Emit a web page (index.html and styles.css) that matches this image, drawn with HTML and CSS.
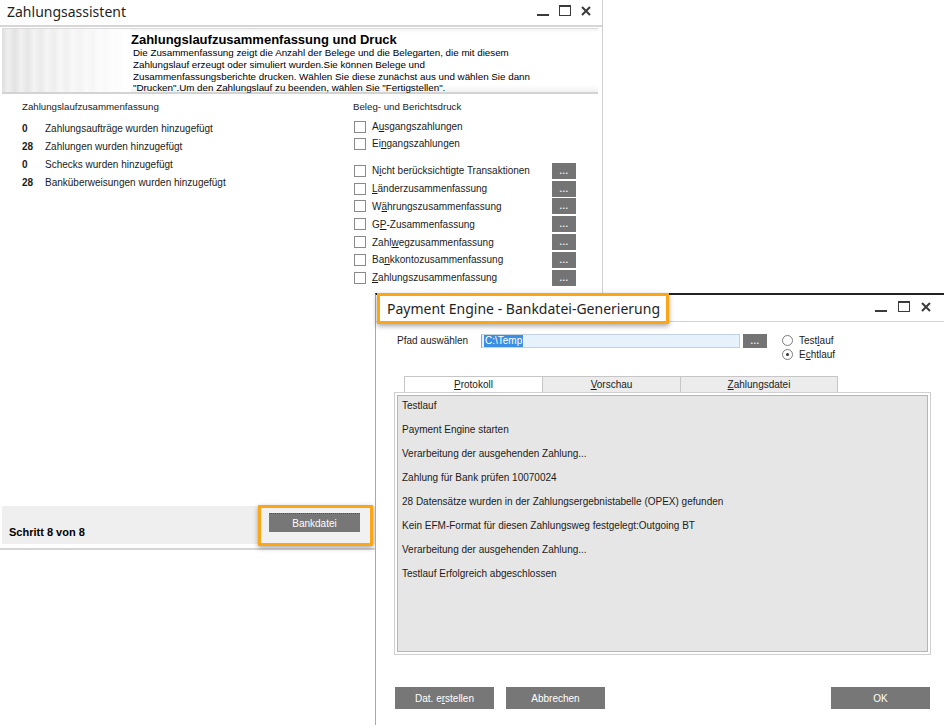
FILE: index.html
```html
<!DOCTYPE html>
<html>
<head>
    <title>Zahlungsassistent</title>
    <link rel="stylesheet" href="styles.css">
</head>
<body>
<div class="desktop">

    <!-- Wizard window (behind) -->
    <div class="win assist">
        <div class="titlebar">
            <span class="title">Zahlungsassistent</span>
            <div class="controls">
                <svg width="12" height="12" viewBox="0 0 12 12"><rect x="0" y="9" width="12" height="2" fill="#3a3a3a"/></svg>
                <svg width="12" height="12" viewBox="0 0 12 12"><rect x="0.5" y="0.5" width="11" height="10" fill="none" stroke="#3a3a3a"/><rect x="0" y="0" width="12" height="2" fill="#3a3a3a"/></svg>
                <svg width="10" height="10" viewBox="0 0 10 10"><path d="M1 1L9 9M9 1L1 9" stroke="#3a3a3a" stroke-width="2"/></svg>
            </div>
        </div>

        <div class="banner">
            <div class="banner-art"></div>
            <div class="banner-text">
                <h2>Zahlungslaufzusammenfassung und Druck</h2>
                <p>Die Zusammenfassung zeigt die Anzahl der Belege und die Belegarten, die mit diesem<br>
                Zahlungslauf erzeugt oder simuliert wurden.Sie können Belege und<br>
                Zusammenfassungsberichte drucken. Wählen Sie diese zunächst aus und wählen Sie dann<br>
                "Drucken".Um den Zahlungslauf zu beenden, wählen Sie "Fertigstellen".</p>
            </div>
        </div>

        <div class="columns">
            <div class="summary">
                <div class="caption">Zahlungslaufzusammenfassung</div>
                <div class="count-row"><b>0</b><span>Zahlungsaufträge wurden hinzugefügt</span></div>
                <div class="count-row"><b>28</b><span>Zahlungen wurden hinzugefügt</span></div>
                <div class="count-row"><b>0</b><span>Schecks wurden hinzugefügt</span></div>
                <div class="count-row"><b>28</b><span>Banküberweisungen wurden hinzugefügt</span></div>
            </div>
            <div class="print">
                <div class="caption">Beleg- und Berichtsdruck</div>
                <div class="check-group">
                    <div class="check-row"><span class="box"></span>A<u>u</u>sgangszahlungen</div>
                    <div class="check-row"><span class="box"></span>Ei<u>n</u>gangszahlungen</div>
                </div>
                <div class="check-group reports">
                    <div class="check-row"><span class="check-label"><span class="box"></span>N<u>i</u>cht berücksichtigte Transaktionen</span><button class="dots">...</button></div>
                    <div class="check-row"><span class="check-label"><span class="box"></span><u>L</u>änderzusammenfassung</span><button class="dots">...</button></div>
                    <div class="check-row"><span class="check-label"><span class="box"></span>W<u>ä</u>hrungszusammenfassung</span><button class="dots">...</button></div>
                    <div class="check-row"><span class="check-label"><span class="box"></span>G<u>P</u>-Zusammenfassung</span><button class="dots">...</button></div>
                    <div class="check-row"><span class="check-label"><span class="box"></span>Zahl<u>w</u>egzusammenfassung</span><button class="dots">...</button></div>
                    <div class="check-row"><span class="check-label"><span class="box"></span>Ba<u>n</u>kkontozusammenfassung</span><button class="dots">...</button></div>
                    <div class="check-row"><span class="check-label"><span class="box"></span><u>Z</u>ahlungszusammenfassung</span><button class="dots">...</button></div>
                </div>
            </div>
        </div>

        <div class="footer">
            <span class="step">Schritt 8 von 8</span>
            <div class="highlight">
                <button class="btn bank">Bankdatei</button>
            </div>
        </div>
    </div>

    <!-- Payment Engine window (front) -->
    <div class="win engine">
        <div class="titlebar">
            <div class="highlight title-frame">
                <span class="title">Payment Engine - Bankdatei-Generierung</span>
            </div>
            <div class="controls">
                <svg width="12" height="12" viewBox="0 0 12 12"><rect x="0" y="9" width="12" height="2" fill="#3a3a3a"/></svg>
                <svg width="12" height="12" viewBox="0 0 12 12"><rect x="0.5" y="0.5" width="11" height="10" fill="none" stroke="#3a3a3a"/><rect x="0" y="0" width="12" height="2" fill="#3a3a3a"/></svg>
                <svg width="10" height="10" viewBox="0 0 10 10"><path d="M1 1L9 9M9 1L1 9" stroke="#3a3a3a" stroke-width="2"/></svg>
            </div>
        </div>

        <div class="engine-body">
            <div class="path-row">
                <span class="path-label">Pfad auswählen</span>
                <div class="path-input"><span class="selected">C:\Temp</span></div>
                <button class="dots">...</button>
                <div class="radios">
                    <div class="radio-row"><span class="radio"></span>Test<u>l</u>auf</div>
                    <div class="radio-row"><span class="radio checked"></span>E<u>c</u>htlauf</div>
                </div>
            </div>

            <div class="tabs">
                <div class="tab active"><u>P</u>rotokoll</div>
                <div class="tab"><u>V</u>orschau</div>
                <div class="tab wide"><u>Z</u>ahlungsdatei</div>
            </div>
            <div class="panel">
                <div class="log">
                    <div>Testlauf</div>
                    <div>Payment Engine starten</div>
                    <div>Verarbeitung der ausgehenden Zahlung...</div>
                    <div>Zahlung für Bank prüfen 10070024</div>
                    <div>28 Datensätze wurden in der Zahlungsergebnistabelle (OPEX) gefunden</div>
                    <div>Kein EFM-Format für diesen Zahlungsweg festgelegt:Outgoing BT</div>
                    <div>Verarbeitung der ausgehenden Zahlung...</div>
                    <div>Testlauf Erfolgreich abgeschlossen</div>
                </div>
            </div>

            <div class="actions">
                <button class="btn">Dat. e<u>r</u>stellen</button>
                <button class="btn">Abbrechen</button>
                <button class="btn ok">OK</button>
            </div>
        </div>
    </div>

</div>
</body>
</html>
```

FILE: styles.css
```css
body {
    margin: 0;
    background-color: #fff;
    font-family: "Liberation Sans", Arial, sans-serif;
    font-size: 10px;
    color: #1b1b1b;
}
.desktop {
    position: relative;
    width: 944px;
    height: 725px;
    overflow: hidden;
    background-color: #fff;
}
.win {
    position: absolute;
    box-sizing: border-box;
    background-color: #fff;
    display: flex;
    flex-direction: column;
}
.titlebar {
    display: flex;
    align-items: center;
    box-sizing: border-box;
}
.title {
    font-family: "Noto Sans", sans-serif;
    font-size: 14px;
    color: #1f1f1f;
}
.controls {
    margin-left: auto;
    display: flex;
    align-items: center;
    gap: 10px;
}
.controls svg {
    display: block;
}
u {
    text-decoration: underline;
    text-underline-offset: 1px;
}

/* ---------- wizard ---------- */
.assist {
    left: 0;
    top: 0;
    width: 603px;
    height: 550px;
    border-right: 1px solid #cfcfcf;
    border-bottom: 2px solid #d6d6d6;
}
.assist .titlebar {
    height: 27px;
    padding: 0 11px 3px 7px;
    border-bottom: 2px solid #d6d6d6;
}
.banner {
    display: flex;
    height: 63px;
    margin: 1px 4px 0 2px;
    border-top: 1px solid #dadada;
    border-bottom: 2px solid #d3d3d3;
    background: linear-gradient(180deg, #f4f4f4 0, #fff 4px, #fff 56px, #f1f1f1 100%);
}
.banner-art {
    width: 129px;
    flex-shrink: 0;
    background:
        repeating-linear-gradient(90deg, rgba(255,255,255,0) 0, rgba(255,255,255,0.5) 6px, rgba(255,255,255,0) 13px),
        linear-gradient(90deg, #dedede 0, #ececec 35%, #f6f6f6 70%, #fff 100%);
}
.banner-text h2 {
    margin: 4px 0 0;
    font-size: 13px;
    line-height: 13px;
    color: #000;
}
.banner-text p {
    margin: 1px 0 0 2px;
    font-size: 9.8px;
    line-height: 11.8px;
    color: #000;
}
.columns {
    display: grid;
    grid-template-columns: 331px 1fr;
    padding: 6px 0 0 22px;
    flex: 1;
}
.caption {
    line-height: 14px;
    font-size: 9.7px;
}
.summary .caption {
    margin-bottom: 6px;
}
.count-row {
    display: flex;
    line-height: 18px;
}
.count-row b {
    width: 23px;
}
.check-group {
    margin-top: 4px;
}
.check-group .check-row {
    height: 17px;
}
.check-group.reports {
    margin-top: 10px;
}
.check-group.reports .check-row {
    height: 17.8px;
}
.check-row {
    display: flex;
    align-items: center;
}
.check-label {
    display: flex;
    align-items: center;
    width: 199px;
}
.box {
    width: 10px;
    height: 10px;
    margin: 0 6px 0 1px;
    border: 1px solid #8a8a8a;
    background-color: #fff;
}
.dots {
    width: 24px;
    height: 16px;
    padding: 0;
    border: none;
    background-color: #747474;
    color: #f2f2f2;
    font-family: "Liberation Sans", Arial, sans-serif;
    font-size: 9px;
    font-weight: bold;
    line-height: 10px;
    letter-spacing: 0.5px;
}
.footer {
    display: grid;
    grid-template-columns: 256px auto;
    height: 38px;
    margin: 0 0 4px 2px;
    background-color: #efefef;
}
.step {
    padding: 19px 0 0 7px;
    font-size: 11px;
    font-weight: bold;
    line-height: 14px;
    color: #000;
}
.highlight {
    border: 3px solid #fba617;
    background-color: #fff;
    box-shadow: 0 2px 5px rgba(0, 0, 0, 0.35);
}
.footer .highlight {
    align-self: start;
    margin-top: -1px;
    width: 101px;
    height: 30px;
    padding: 5px 0 0 8px;
    box-sizing: content-box;
    background-color: #f1f1f1;
}
.btn {
    border: none;
    padding: 0;
    background-color: #777;
    color: #fff;
    font-family: "Liberation Sans", Arial, sans-serif;
    font-size: 10px;
    cursor: pointer;
}
.btn.bank {
    width: 91px;
    height: 19px;
    border-top: 1px dotted #555;
}

/* ---------- payment engine ---------- */
.engine {
    left: 375px;
    top: 293px;
    width: 570px;
    height: 450px;
    border-top: 2px solid #222;
    border-left: 1px solid #a9a9a9;
}
.engine .titlebar {
    height: 27px;
    align-items: flex-start;
    padding-right: 14px;
    border-bottom: 1px solid #d3d3d3;
}
.title-frame {
    box-sizing: border-box;
    height: 31px;
    margin: -2px 0 0 1px;
    padding: 0 6px 0 7px;
    display: flex;
    align-items: center;
}
.engine .controls {
    margin-top: 6px;
    gap: 11px;
}
.engine-body {
    padding: 0 0 0 18px;
}
.path-row {
    display: flex;
    align-items: flex-start;
    margin-top: 12px;
    padding-left: 3px;
}
.path-label {
    width: 84px;
    line-height: 14px;
}
.path-input {
    box-sizing: border-box;
    width: 259px;
    height: 14px;
    padding: 0 0 0 2px;
    border: 1px solid #c2d3df;
    border-left-color: #8ea7b8;
    background-color: #e6f2fb;
    line-height: 12px;
}
.selected {
    display: inline-block;
    padding: 0 1px;
    background-color: #3c8fe0;
    color: #fff;
}
.path-row .dots {
    width: 24px;
    height: 14px;
    margin: 0 0 0 3px;
}
.radios {
    margin: 0 0 0 15px;
}
.radio-row {
    display: flex;
    align-items: center;
    height: 13.5px;
}
.radio {
    box-sizing: border-box;
    width: 11px;
    height: 11px;
    margin-right: 6px;
    border: 1px solid #7c7c7c;
    border-radius: 50%;
    background-color: #fff;
    position: relative;
}
.radio.checked::after {
    content: "";
    position: absolute;
    left: 3px;
    top: 3px;
    width: 3px;
    height: 3px;
    border-radius: 50%;
    background-color: #333;
}
.tabs {
    display: flex;
    margin: 15px 0 0 10px;
}
.tab {
    box-sizing: border-box;
    width: 138px;
    height: 16px;
    border: 1px solid #c6c6c6;
    border-bottom: none;
    border-left: none;
    background-color: #ececec;
    text-align: center;
    line-height: 15px;
}
.tab.active {
    width: 139px;
    border-left: 1px solid #c6c6c6;
    background-color: #fff;
}
.tab.wide {
    width: 157px;
}
.panel {
    box-sizing: border-box;
    width: 537px;
    height: 263px;
    padding: 2px;
    border: 1px solid #cfcfcf;
}
.log {
    box-sizing: border-box;
    height: 100%;
    padding: 3px 0 0 4px;
    border: 1px solid #b6b6b6;
    background-color: #e6e6e6;
}
.log div {
    line-height: 14px;
    margin-bottom: 10px;
}
.actions {
    display: flex;
    gap: 12px;
    width: 535px;
    margin: 32px 0 0 1px;
}
.actions .btn {
    width: 99px;
    height: 22px;
}
.actions .ok {
    margin-left: auto;
}
```
